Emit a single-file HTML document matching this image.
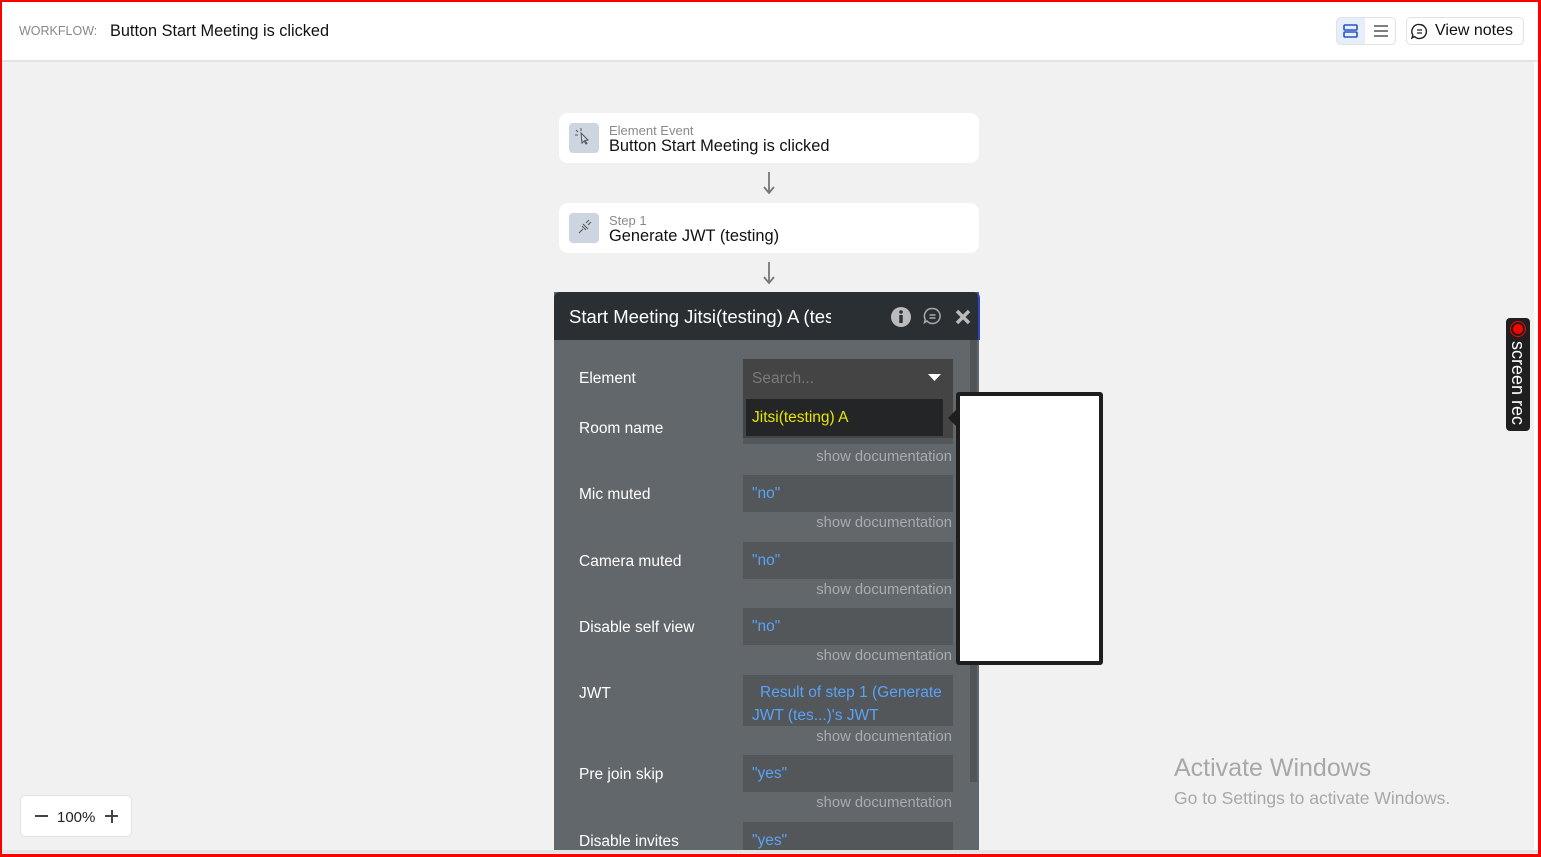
<!DOCTYPE html>
<html><head><meta charset="utf-8"><style>
*{margin:0;padding:0;box-sizing:border-box}
body{width:1541px;height:857px;overflow:hidden;background:#f1f1f1;font-family:"Liberation Sans",sans-serif;position:relative}
.a{position:absolute}
.lbl{position:absolute;left:579px;color:#fff;font-size:15.5px}
.inp{position:absolute;left:743px;width:210px;height:37px;background:#53575a;color:#5aa2f5;font-size:15.5px;padding:10px 9px}
.doc{position:absolute;right:589px;color:#a9acae;font-size:14.8px}
.card{position:absolute;left:559px;width:420px;height:50px;background:#fff;border-radius:9px}
.ic{position:absolute;left:10px;top:10px;width:30px;height:30px;background:#cdd6e0;border-radius:4px}
.t1{position:absolute;left:50px;top:10px;font-size:13px;color:#8a8a8a}
.t2{position:absolute;left:50px;top:24px;font-size:16.4px;color:#111}
</style></head><body>
<div class="a" style="left:0;top:0;width:1541px;height:62px;background:#fff;border-bottom:2px solid #e4e4e4"></div>
<div class="a" style="left:19px;top:24px;font-size:12.5px;color:#888">WORKFLOW:</div>
<div class="a" style="left:110px;top:22px;font-size:16.3px;color:#111">Button Start Meeting is clicked</div>
<div class="a" style="left:1336px;top:17px;width:60px;height:28px;border:1px solid #e2e2e2;border-radius:5px;background:#fff"></div>
<div class="a" style="left:1337px;top:18px;width:28px;height:26px;background:#e6eefc;border-radius:4px 0 0 4px"></div>
<svg class="a" style="left:1343px;top:23px" width="16" height="16"><rect x="1" y="2" width="13" height="5" rx="1" fill="none" stroke="#2652c8" stroke-width="1.6"/><rect x="1" y="9" width="13" height="5" rx="1" fill="none" stroke="#2652c8" stroke-width="1.6"/></svg>
<svg class="a" style="left:1373px;top:23px" width="16" height="16"><path d="M1 3h14M1 8h14M1 13h14" stroke="#555" stroke-width="1.5"/></svg>
<div class="a" style="left:1406px;top:17px;width:118px;height:28px;border:1px solid #e2e2e2;border-radius:5px;background:#fff"></div>
<svg class="a" style="left:1411px;top:23px" width="17" height="17"><path d="M8.5 1.5a7 7 0 1 1-5 12l-2.5 1.5 0.8-3A7 7 0 0 1 8.5 1.5z" fill="none" stroke="#222" stroke-width="1.4"/><path d="M6 7h5M6 10h5" stroke="#222" stroke-width="1.3"/></svg>
<div class="a" style="left:1435px;top:22px;font-size:16px;color:#111">View notes</div>

<div class="card" style="top:113px"><div class="ic"><svg width="30" height="30"><path d="M12 10l7 7-3 .5 2 3-1 .6-2-3-2 2z" fill="none" stroke="#555" stroke-width="1"/><path d="M9 9l-2-2M12 8V5M9 12H6" stroke="#555" stroke-width="1"/></svg></div><div class="t1">Element Event</div><div class="t2">Button Start Meeting is clicked</div></div>
<svg class="a" style="left:762px;top:172px" width="14" height="24"><path d="M7 0v20M2 15l5 6 5-6" fill="none" stroke="#777" stroke-width="1.8"/></svg>
<div class="card" style="top:203px"><div class="ic"><svg width="30" height="30"><path d="M10 20l4-4M13 13l4 4M14 11l5 5M17 10l3-3M19 12l3-3" fill="none" stroke="#555" stroke-width="1"/></svg></div><div class="t1">Step 1</div><div class="t2">Generate JWT (testing)</div></div>
<svg class="a" style="left:762px;top:262px" width="14" height="24"><path d="M7 0v20M2 15l5 6 5-6" fill="none" stroke="#777" stroke-width="1.8"/></svg>

<div class="a" style="left:554px;top:292px;width:425px;height:558px;background:#62676b"></div>
<div class="a" style="left:554px;top:292px;width:426px;height:48px;background:#2a2f33;border-radius:6px 6px 0 0;border-right:2px solid #2a47c0"></div>
<div class="a" style="left:569px;top:306px;font-size:18.5px;color:#fff;width:262px;overflow:hidden;white-space:nowrap">Start Meeting Jitsi(testing) A (testing)</div>
<svg class="a" style="left:890px;top:306px" width="22" height="22"><circle cx="11" cy="11" r="10" fill="#bbb"/><circle cx="11" cy="6" r="1.8" fill="#2a2f33"/><rect x="9.3" y="9" width="3.4" height="8" fill="#2a2f33"/></svg>
<svg class="a" style="left:923px;top:307px" width="19" height="19"><path d="M9.5 1.5a7.5 7.5 0 1 1-5.5 12.5l-2.5 1.5 .8-3A7.5 7.5 0 0 1 9.5 1.5z" fill="none" stroke="#aaa" stroke-width="1.5"/><path d="M6.5 8h6M6.5 11h6" stroke="#aaa" stroke-width="1.4"/></svg>
<svg class="a" style="left:955px;top:309px" width="16" height="16"><path d="M2 2l12 12M14 2L2 14" stroke="#bbb" stroke-width="3.5"/></svg>
<div class="a" style="left:970px;top:340px;width:7px;height:442px;background:#515558"></div>

<div class="lbl" style="top:370px">Element</div>
<div class="a" style="left:743px;top:359px;width:210px;height:79px;background:#444"></div>
<div class="a" style="left:752px;top:370px;font-size:15.5px;color:#7a7a7a">Search...</div>
<svg class="a" style="left:928px;top:374px" width="13" height="8"><path d="M0 0h13L6.5 7z" fill="#fff"/></svg>
<div class="a" style="left:746px;top:399px;width:197px;height:37px;background:#232527;color:#e6e600;font-size:15.5px;padding:10px 6px">Jitsi(testing) A</div>
<div class="lbl" style="top:420px">Room name</div>
<div class="a" style="left:743px;top:438px;width:210px;height:6px;background:#53575a"></div>
<div class="doc" style="top:449px">show documentation</div>

<div class="lbl" style="top:486px">Mic muted</div><div class="inp" style="top:475px">"no"</div><div class="doc" style="top:515px">show documentation</div>
<div class="lbl" style="top:553px">Camera muted</div><div class="inp" style="top:542px">"no"</div><div class="doc" style="top:582px">show documentation</div>
<div class="lbl" style="top:619px">Disable self view</div><div class="inp" style="top:608px">"no"</div><div class="doc" style="top:648px">show documentation</div>
<div class="lbl" style="top:685px">JWT</div><div class="inp" style="top:675px;height:51px;line-height:23px;padding:6px 9px;text-indent:8px">Result of step 1 (Generate JWT (tes...)'s JWT</div><div class="doc" style="top:729px">show documentation</div>
<div class="lbl" style="top:766px">Pre join skip</div><div class="inp" style="top:755px">"yes"</div><div class="doc" style="top:795px">show documentation</div>
<div class="lbl" style="top:833px">Disable invites</div><div class="inp" style="top:822px;height:28px">"yes"</div>

<div class="a" style="left:956px;top:392px;width:147px;height:273px;background:#fff;border:4px solid #1e1e1e;border-radius:3px"></div>
<svg class="a" style="left:946px;top:408px" width="12" height="20"><path d="M12 0L2 10l10 10z" fill="#1e1e1e"/></svg>

<div class="a" style="left:1506px;top:318px;width:24px;height:113px;background:#1f1f1f;border-radius:4px"></div>
<div class="a" style="left:1511px;top:322px;width:14px;height:14px;border-radius:50%;background:#f00;border:2px solid #1f1f1f;box-shadow:0 0 0 1px #f00"></div>
<div class="a" style="left:1508px;top:341px;writing-mode:vertical-rl;color:#fff;font-size:18px;line-height:20px">screen rec</div>

<div class="a" style="left:1174px;top:754px;font-size:25px;color:#a8a8a8">Activate Windows</div>
<div class="a" style="left:1174px;top:788px;font-size:17.5px;color:#a8a8a8">Go to Settings to activate Windows.</div>

<div class="a" style="left:20px;top:795px;width:112px;height:42px;background:#fff;border:1px solid #e2e2e2;border-radius:5px"></div>
<div class="a" style="left:35px;top:815px;width:13px;height:2px;background:#444"></div>
<div class="a" style="left:57px;top:809px;font-size:15px;color:#222">100%</div>
<div class="a" style="left:105px;top:815px;width:13px;height:2px;background:#444"></div>
<div class="a" style="left:110.5px;top:809.5px;width:2px;height:13px;background:#444"></div>

<div class="a" style="left:1534px;top:62px;width:4px;height:792px;background:#fff"></div>
<div class="a" style="left:0;top:850px;width:1541px;height:3px;background:#e4e4e4"></div>
<div class="a" style="left:0;top:0;width:1541px;height:857px;border:2px solid #f00;border-right-width:3px;border-bottom-width:3px"></div>
</body></html>
